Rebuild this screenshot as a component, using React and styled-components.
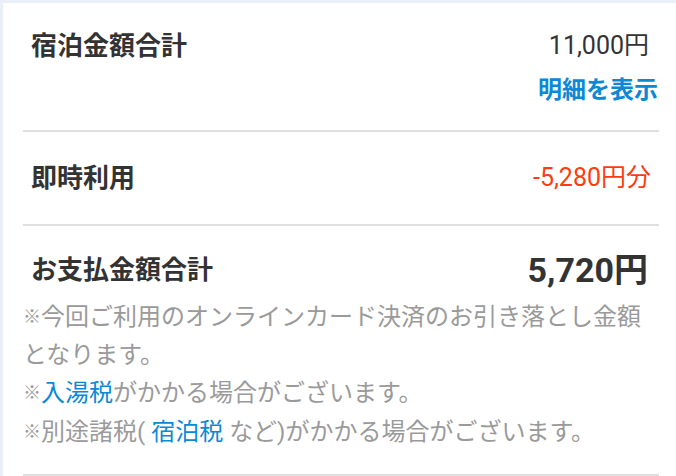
import React from "react";
import styled, { createGlobalStyle } from "styled-components";

const Global = createGlobalStyle`
  html, body { margin: 0; padding: 0; background: #e8eff7; }
  body { font-family: Roboto, "Noto Sans CJK JP", sans-serif; -webkit-font-smoothing: antialiased; }
`;

const Card = styled.div`
  margin: 3px 0 0 3px;
  background: #fff;
  padding: 0 17px 0 20px;
  min-height: 473px;
  box-sizing: border-box;
`;

const Section = styled.section`
  border-bottom: 2px solid #dfdfdf;
  padding: ${(p) => p.$pad};
  display: flex;
  flex-direction: column;
`;

const Row = styled.div`
  display: flex;
  justify-content: space-between;
  align-items: center;
  height: ${(p) => p.$h || 40}px;
  padding: 0 ${(p) => p.$pr || 10}px 0 8px;
`;

const Label = styled.div`
  font-size: 26px;
  font-weight: 700;
  color: #333;
`;

const Value = styled.div`
  font-size: ${(p) => p.$size || 25}px;
  font-weight: ${(p) => (p.$bold ? 700 : 400)};
  color: ${(p) => p.$color || "#333"};
`;

const LinkRow = styled.div`
  display: flex;
  justify-content: flex-end;
  margin-top: 7px;
  padding-right: 1px;
`;

const DetailLink = styled.a`
  font-size: 24px;
  font-weight: 700;
  color: #0b88d6;
  text-decoration: none;
`;

const Notes = styled.div`
  margin-top: 9px;
  padding-bottom: 23px;
`;

const Note = styled.p`
  margin: 0;
  font-size: 24px;
  line-height: 37.5px;
  color: #9a9a9a;
`;

const Mark = styled.span`
  font-size: 18px;
  vertical-align: 2px;
`;

const Inline = styled.span`
  color: #0b88d6;
`;

export default function App() {
  return (
    <>
      <Global />
      <Card>
        <Section $pad="20px 0 25px">
          <Row>
            <Label>宿泊金額合計</Label>
            <Value>11,000円</Value>
          </Row>
          <LinkRow>
            <DetailLink href="#">明細を表示</DetailLink>
          </LinkRow>
        </Section>
        <Section $pad="23px 0 29px">
          <Row $pr={8}>
            <Label>即時利用</Label>
            <Value $color="#ff3c0f">-5,280円分</Value>
          </Row>
        </Section>
        <Section $pad="19px 0 0">
          <Row $h={44} $pr={11}>
            <Label>お支払金額合計</Label>
            <Value $size={34} $bold>5,720円</Value>
          </Row>
          <Notes>
            <Note><Mark>※</Mark>今回ご利用のオンラインカード決済のお引き落とし金額となります。</Note>
            <Note><Mark>※</Mark><Inline>入湯税</Inline>がかかる場合がございます。</Note>
            <Note><Mark>※</Mark>別途諸税( <Inline>宿泊税</Inline> など)がかかる場合がございます。</Note>
          </Notes>
        </Section>
      </Card>
    </>
  );
}
